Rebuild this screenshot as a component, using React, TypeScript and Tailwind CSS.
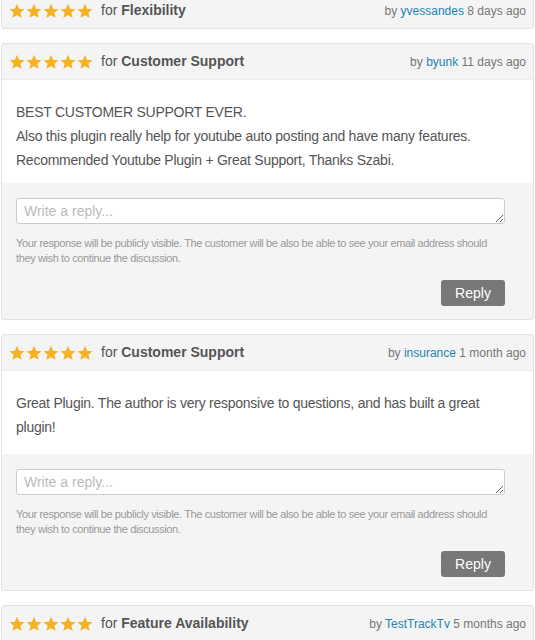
const Stars = () => (
  <div className="flex gap-px">
    {[0, 1, 2, 3, 4].map((i) => (
      <svg key={i} width="16" height="16" viewBox="0 0 24 24" className="fill-[#f4b224]">
        <path d="M12 1.2l3.2 7.3 7.9.7-6 5.3 1.8 7.8L12 18.2l-6.9 4.1 1.8-7.8-6-5.3 7.9-.7z" />
      </svg>
    ))}
  </div>
);

type Review = {
  topic: string;
  author: string;
  when: string;
  body?: string[];
  bodyPad?: string;
};

const Header = ({ r }: { r: Review }) => (
  <div className="flex h-[35px] items-center justify-between bg-[#f4f4f4] pl-[7px] pr-[7px]">
    <div className="flex items-center gap-[8px]">
      <Stars />
      <span className="text-[14px] text-[#555]">
        for <b className="font-bold">{r.topic}</b>
      </span>
    </div>
    <span className="text-[12px] text-[#777]">
      by <span className="text-[#2585b2]">{r.author}</span> {r.when}
    </span>
  </div>
);

const ReviewCard = ({ r }: { r: Review }) => (
  <div className="overflow-hidden rounded-[3px] border border-[#e2e2e2] bg-[#f4f4f4]">
    <Header r={r} />
    {r.body && (
      <>
        <div className={`border-t border-[#ececec] bg-white px-[14px] pt-5 text-[14px] leading-6 tracking-[-0.25px] text-[#555] ${r.bodyPad}`}>
          {r.body.map((line, i) => (
            <p key={i}>{line}</p>
          ))}
        </div>
        <div className="pt-[15px] pr-[28px] pb-[13px] pl-[14px]">
          <textarea
            placeholder="Write a reply..."
            rows={1}
            className="block h-[26px] w-full resize-y rounded-[3px] border border-[#ccc] bg-white px-[7px] py-[2px] text-[14px] leading-5 text-[#555] placeholder:text-[#bbb]"
          />
          <p className="mt-3 text-[11px] leading-[15px] tracking-[-0.38px] text-[#999]">
            Your response will be publicly visible. The customer will be also be able to see your email address should they wish to continue the discussion.
          </p>
          <div className="mt-[14px] flex justify-end">
            <button className="h-[26px] w-16 rounded-[3px] bg-[#787878] text-[14px] text-white">Reply</button>
          </div>
        </div>
      </>
    )}
  </div>
);

const reviews: Review[] = [
  {
    topic: "Customer Support",
    author: "byunk",
    when: "11 days ago",
    bodyPad: "pb-[11px]",
    body: [
      "BEST CUSTOMER SUPPORT EVER.",
      "Also this plugin really help for youtube auto posting and have many features.",
      "Recommended Youtube Plugin + Great Support, Thanks Szabi.",
    ],
  },
  {
    topic: "Customer Support",
    author: "insurance",
    when: "1 month ago",
    bodyPad: "pb-[15px]",
    body: ["Great Plugin. The author is very responsive to questions, and has built a great plugin!"],
  },
  { topic: "Feature Availability", author: "TestTrackTv", when: "5 months ago" },
];

export default function App() {
  return (
    <div className="h-[640px] overflow-hidden bg-white px-px font-['Liberation_Sans',Arial,sans-serif]">
      <div className="-mt-[8px] flex flex-col gap-[14px]">
        <ReviewCard r={{ topic: "Flexibility", author: "yvessandes", when: "8 days ago" }} />
        {reviews.map((r, i) => (
          <ReviewCard key={i} r={r} />
        ))}
      </div>
    </div>
  );
}
